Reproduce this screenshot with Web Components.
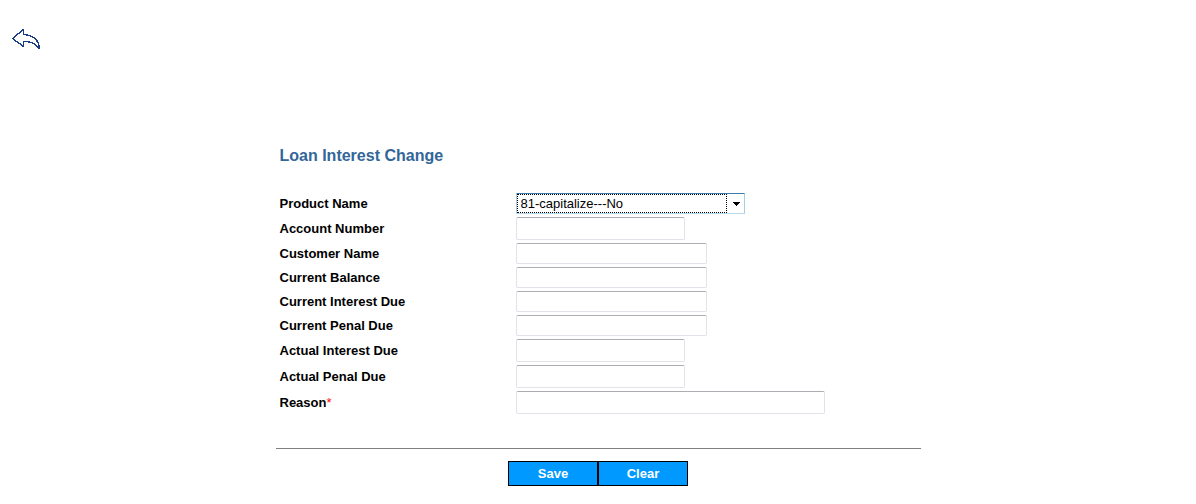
<!DOCTYPE html>
<html lang="en">
<head>
<meta charset="utf-8">
<title>Loan Interest Change</title>
<style>
body { margin: 0; background: #fff; color: #000; font: 13px/16px Arial, "Liberation Sans", sans-serif; }
</style>
</head>
<body>
<loan-page>
  <back-link slot="nav" href="#back"></back-link>
  <loan-form heading="Loan Interest Change">
    <select-field label="Product Name" value="81-capitalize---No"></select-field>
    <text-field label="Account Number" size="short"></text-field>
    <text-field label="Customer Name" size="medium"></text-field>
    <text-field label="Current Balance" size="medium"></text-field>
    <text-field label="Current Interest Due" size="medium"></text-field>
    <text-field label="Current Penal Due" size="medium"></text-field>
    <text-field label="Actual Interest Due" size="short"></text-field>
    <text-field label="Actual Penal Due" size="short"></text-field>
    <text-field label="Reason" size="long" required></text-field>
    <action-button slot="actions">Save</action-button>
    <action-button slot="actions">Clear</action-button>
  </loan-form>
</loan-page>
<script>
const rowStyle = `
  :host { display: grid; grid-template-columns: 236px 1fr; align-items: center; }
  label { font-weight: bold; }
`;

class LoanPage extends HTMLElement {
  constructor() {
    super();
    this.attachShadow({ mode: "open" }).innerHTML = `
      <style>
        :host { display: block; }
        header { padding: 28px 11px 68px; }
        main { padding: 28px 16px 16px; }
      </style>
      <header><slot name="nav"></slot></header>
      <main><slot></slot></main>`;
  }
}

class BackLink extends HTMLElement {
  constructor() {
    super();
    this.attachShadow({ mode: "open" }).innerHTML = `
      <style>
        :host { display: block; }
        a { display: block; width: 30px; color: #1b3d86; }
        svg { display: block; }
      </style>
      <a aria-label="Back"><svg width="30" height="22" viewBox="0 0 30 22" fill="none" stroke="currentColor" stroke-width="1.4" stroke-linejoin="round" shape-rendering="crispEdges">
        <path d="M1.5 10.5L12.5 1.5V6.5C20 7 27.5 10 28.5 20.5H27.5C25.5 15.5 20 13.5 12.5 13.5V18.5Z"/>
      </svg></a>`;
    this.shadowRoot.querySelector("a").href = this.getAttribute("href");
  }
}

class LoanForm extends HTMLElement {
  constructor() {
    super();
    this.attachShadow({ mode: "open" }).innerHTML = `
      <style>
        :host { display: block; max-width: 645px; margin: 0 auto; }
        h1 { margin: 0 0 28px; padding: 0 4px; font-size: 16px; line-height: 19px; color: #336699; }
        .fields { display: grid; gap: 3px; padding: 0 4px; }
        hr { margin: 34px 0 12px; border: 0; border-top: 1px solid #808080; }
        .actions { display: flex; justify-content: center; }
      </style>
      <h1></h1>
      <div class="fields"><slot></slot></div>
      <hr>
      <div class="actions"><slot name="actions"></slot></div>`;
    this.shadowRoot.querySelector("h1").textContent = this.getAttribute("heading");
  }
}

class TextField extends HTMLElement {
  constructor() {
    super();
    this.attachShadow({ mode: "open" }).innerHTML = `
      <style>
        ${rowStyle}
        span { color: #f00; font-weight: normal; }
        input { box-sizing: border-box; width: 169px; max-width: 100%; height: 23px; margin: 0; padding: 1px 4px;
          border: 1px solid #e2e3ea; border-top-color: #abadb3; border-radius: 2px; font: inherit; background: #fff; outline: 0; }
        :host([size="medium"]) input { width: 191px; height: 21px; }
        :host([size="long"]) input { width: 309px; }
      </style>
      <label for="field"></label>
      <input id="field" type="text">`;
    const label = this.shadowRoot.querySelector("label");
    label.textContent = this.getAttribute("label");
    if (this.hasAttribute("required")) {
      const mark = document.createElement("span");
      mark.textContent = "*";
      label.append(mark);
      this.shadowRoot.querySelector("input").required = true;
    }
  }
}

class SelectField extends HTMLElement {
  constructor() {
    super();
    this.attachShadow({ mode: "open" }).innerHTML = `
      <style>
        ${rowStyle}
        .box { display: grid; grid-template-columns: 1fr 17px; align-items: center; box-sizing: border-box; width: 229px; height: 21px;
          border: 1px solid #a4cde6; border-top-color: #3d7bad; border-bottom-color: #b7d9ed; border-radius: 1px; }
        select { grid-area: 1 / 1 / 2 / 3; box-sizing: border-box; width: 100%; height: 19px; margin: 0; padding: 0 18px 0 4px;
          appearance: none; border: 0; border-radius: 0; background: none; color: #000; font: inherit; outline: 0; }
        .focus { grid-area: 1 / 1; height: 19px; box-sizing: border-box; border: 1px dotted #000; pointer-events: none; }
        svg { grid-area: 1 / 2; justify-self: end; margin-right: 4px; pointer-events: none; }
      </style>
      <label for="field"></label>
      <div class="box">
        <select id="field"><option></option></select>
        <div class="focus"></div>
        <svg width="7" height="4" viewBox="0 0 7 4" shape-rendering="crispEdges"><path d="M0 0H7V1H6V2H5V3H4V4H3V3H2V2H1V1H0Z"/></svg>
      </div>`;
    this.shadowRoot.querySelector("label").textContent = this.getAttribute("label");
    this.shadowRoot.querySelector("option").textContent = this.getAttribute("value");
  }
}

class ActionButton extends HTMLElement {
  constructor() {
    super();
    this.attachShadow({ mode: "open" }).innerHTML = `
      <style>
        :host { display: block; }
        button { display: block; box-sizing: border-box; width: 90px; height: 25px; margin: 0; padding: 0;
          border: 1px solid #000; border-radius: 0; background: #0099ff; color: #fff; font: inherit; font-weight: bold; }
      </style>
      <button type="button"><slot></slot></button>`;
  }
}

customElements.define("loan-page", LoanPage);
customElements.define("back-link", BackLink);
customElements.define("loan-form", LoanForm);
customElements.define("text-field", TextField);
customElements.define("select-field", SelectField);
customElements.define("action-button", ActionButton);
</script>
</body>
</html>
